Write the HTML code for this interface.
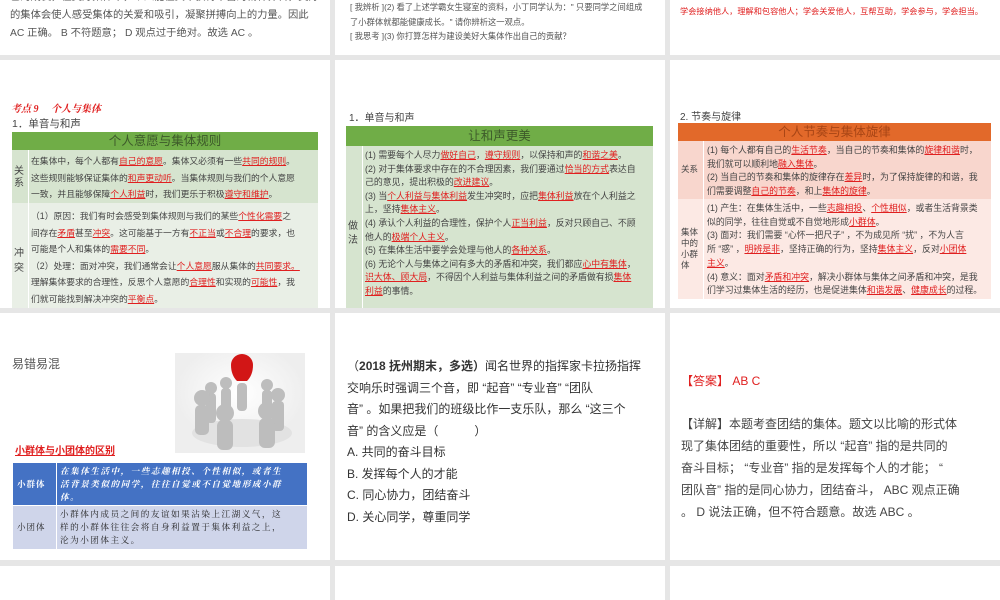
<!DOCTYPE html>
<html><head><meta charset="utf-8">
<style>
*{margin:0;padding:0;box-sizing:border-box}
body{width:1000px;height:600px;background:#e6e6e6;position:relative;overflow:hidden;font-family:"Liberation Sans","Noto Sans CJK SC",sans-serif;color:#444}
.s{position:absolute;background:#fff;overflow:hidden}
.a{position:absolute;white-space:nowrap}
u{color:#e02020;text-decoration:underline}
.r{color:#e02020}
</style></head><body>
<!-- row1 -->
<div class="s" style="left:0;top:0;width:330px;height:55px">
 <div class="a" style="left:10px;top:-11px;font-size:10.3px;line-height:18px;color:#555">己的成長，在美好集体中，个人能在其中获得丰富的精神养料，美好<br>的集体会使人感受集体的关爱和吸引，凝聚拼搏向上的力量。因此<br>AC 正确。 B 不符题意； D 观点过于绝对。故选 AC 。</div>
</div>
<div class="s" style="left:335px;top:0;width:330px;height:55px">
 <div class="a" style="left:15px;top:0;font-size:8.3px;line-height:14.5px;color:#555">[ 我辨析 ](2) 看了上述学霸女生寝室的资料，小丁同学认为：" 只要同学之间组成<br>了小群体就都能健康成长。" 请你辨析这一观点。<br>[ 我思考 ](3) 你打算怎样为建设美好大集体作出自己的贡献？</div>
</div>
<div class="s" style="left:670px;top:0;width:330px;height:55px">
 <div class="a r" style="left:10px;top:5px;font-size:8.2px">学会接纳他人，理解和包容他人；学会关爱他人，互帮互助，学会参与，学会担当。</div>
</div>
<!-- row2 col1 -->
<div class="s" style="left:0;top:60px;width:330px;height:248px">
 <div class="a r" style="left:11px;top:40px;font-size:10px;font-style:italic;font-weight:bold;font-family:'Liberation Serif','Noto Serif CJK SC',serif">考点 9　 个人与集体</div>
 <div class="a" style="left:12px;top:56px;font-size:10.5px">1．单音与和声</div>
 <div class="a" style="left:12px;top:72px;width:306px;height:18px;background:#70ad47;color:#3d5a2a;font-size:12.5px;text-align:center;line-height:18px">个人意愿与集体规则</div>
 <div class="a" style="left:12px;top:90px;width:306px;height:53px;background:#d6e4cf"></div>
 <div class="a" style="left:12px;top:143px;width:306px;height:105px;background:#e9efe6"></div>
 <div class="a" style="left:28px;top:90px;width:1px;height:158px;background:#fff"></div>
 <div class="a" style="left:14px;top:106px;font-size:10px;line-height:12px">关<br>系</div>
 <div class="a" style="left:14px;top:186px;font-size:10px;line-height:15px">冲<br>突</div>
 <div class="a" style="left:31px;top:93px;font-size:8.8px;line-height:16.5px">在集体中，每个人都有<u>自己的意愿</u>。集体又必须有一些<u>共同的规则</u>。<br>这些规则能够保证集体的<u>和声更动听</u>。当集体规则与我们的个人意愿<br>一致，并且能够保障<u>个人利益</u>时，我们更乐于积极<u>遵守和维护</u>。</div>
 <div class="a" style="left:31px;top:148px;font-size:8.8px;line-height:16.5px">（1）原因：我们有时会感受到集体规则与我们的某些<u>个性化需要</u>之<br>间存在<u>矛盾</u>甚至<u>冲突</u>。这可能基于一方有<u>不正当</u>或<u>不合理</u>的要求，也<br>可能是个人和集体的<u>需要不同</u>。<br>（2）处理：面对冲突，我们通常会让<u>个人意愿</u>服从集体的<u>共同要求。</u><br>理解集体要求的合理性，反思个人意愿的<u>合理性</u>和实现的<u>可能性</u>，我<br>们就可能找到解决冲突的<u>平衡点</u>。</div>
</div>
<!-- row2 col2 -->
<div class="s" style="left:335px;top:60px;width:330px;height:248px">
 <div class="a" style="left:14px;top:49px;font-size:10px">1．单音与和声</div>
 <div class="a" style="left:11px;top:66px;width:307px;height:20px;background:#70ad47;color:#3d5a2a;font-size:12.5px;text-align:center;line-height:20px">让和声更美</div>
 <div class="a" style="left:11px;top:86px;width:307px;height:162px;background:#d6e4cf"></div>
 <div class="a" style="left:27px;top:86px;width:1px;height:162px;background:#fff"></div>
 <div class="a" style="left:13px;top:160px;font-size:10px;line-height:14px">做<br>法</div>
 <div class="a" style="left:30px;top:89px;font-size:8.9px;line-height:13.6px">(1) 需要每个人尽力<u>做好自己</u>，<u>遵守规则</u>，以保持和声的<u>和谐之美</u>。<br>(2) 对于集体要求中存在的不合理因素，我们要通过<u>恰当的方式</u>表达自<br>己的意见，提出积极的<u>改进建议</u>。<br>(3) 当<u>个人利益与集体利益</u>发生冲突时，应把<u>集体利益</u>放在个人利益之<br>上，坚持<u>集体主义</u>。<br>(4) 承认个人利益的合理性，保护个人<u>正当利益</u>，反对只顾自己、不顾<br>他人的<u>极端个人主义</u>。<br>(5) 在集体生活中要学会处理与他人的<u>各种关系</u>。<br>(6) 无论个人与集体之间有多大的矛盾和冲突，我们都应<u>心中有集体</u>，<br><u>识大体、顾大局</u>，不得因个人利益与集体利益之间的矛盾做有损<u>集体</u><br><u>利益</u>的事情。</div>
</div>
<!-- row2 col3 -->
<div class="s" style="left:670px;top:60px;width:330px;height:248px">
 <div class="a" style="left:10px;top:48px;font-size:10px">2. 节奏与旋律</div>
 <div class="a" style="left:8px;top:63px;width:313px;height:18px;background:#e2692a;color:#a84515;font-size:12.5px;text-align:center;line-height:18px">个人节奏与集体旋律</div>
 <div class="a" style="left:8px;top:81px;width:313px;height:58px;background:#f8d6cd"></div>
 <div class="a" style="left:8px;top:139px;width:313px;height:100px;background:#fce9e4"></div>
 <div class="a" style="left:33px;top:81px;width:1px;height:158px;background:#fff"></div>
 <div class="a" style="left:11px;top:103px;font-size:8.5px">关系</div>
 <div class="a" style="left:11px;top:167px;font-size:8.5px;line-height:11px">集体<br>中的<br>小群<br>体</div>
 <div class="a" style="left:37px;top:84px;font-size:8.9px;line-height:13.7px">(1) 每个人都有自己的<u>生活节奏</u>，当自己的节奏和集体的<u>旋律和谐</u>时，<br>我们就可以顺利地<u>融入集体</u>。<br>(2) 当自己的节奏和集体的旋律存在<u>差异</u>时，为了保持旋律的和谐，我<br>们需要调整<u>自己的节奏</u>，和上<u>集体的旋律</u>。</div>
 <div class="a" style="left:37px;top:142px;font-size:8.9px;line-height:13.7px">(1) 产生：在集体生活中，一些<u>志趣相投</u>、<u>个性相似</u>，或者生活背景类<br>似的同学，往往自觉或不自觉地形成<u>小群体</u>。<br>(3) 面对：我们需要 “心怀一把尺子” ，不为成见所 “扰” ，不为人言<br>所 “惑” ，<u>明辨是非</u>，坚持正确的行为，坚持<u>集体主义</u>，反对<u>小团体</u><br><u>主义</u>。<br>(4) 意义：面对<u>矛盾和冲突</u>，解决小群体与集体之间矛盾和冲突，是我<br>们学习过集体生活的经历，也是促进集体<u>和谐发展</u>、<u>健康成长</u>的过程。</div>
</div>
<!-- row3 col1 -->
<div class="s" style="left:0;top:313px;width:330px;height:247px">
 <div class="a" style="left:12px;top:42px;font-size:12px;color:#555">易错易混</div>
 <svg class="a" style="left:175px;top:40px" width="130" height="100" viewBox="0 0 130 100">
  <defs><radialGradient id="g" cx="50%" cy="40%"><stop offset="0" stop-color="#fff"/><stop offset="1" stop-color="#eee"/></radialGradient></defs>
  <rect width="130" height="100" fill="url(#g)"/>
  <ellipse cx="67" cy="80" rx="50" ry="14" fill="#e2e2e2"/>
  <path d="M56 12 a11 11 0 1 1 22 0 q0 10 -6 16 h-10 q-6 -6 -6 -16z" fill="#d21616"/>
  <g fill="#bdbdbd">
   <circle cx="36" cy="35" r="6"/><rect x="31" y="40" width="10" height="30" rx="4"/>
   <circle cx="51" cy="30" r="6"/><rect x="46" y="35" width="10" height="28" rx="4"/>
   <circle cx="92" cy="32" r="6"/><rect x="87" y="37" width="10" height="28" rx="4"/>
   <circle cx="103" cy="42" r="7"/><rect x="97" y="48" width="12" height="30" rx="4"/>
   <circle cx="27" cy="45" r="8"/><rect x="20" y="52" width="14" height="30" rx="5"/>
   <rect x="62" y="30" width="10" height="28" rx="4"/>
   <circle cx="50" cy="60" r="9"/><rect x="42" y="67" width="16" height="30" rx="6"/>
   <circle cx="92" cy="58" r="9"/><rect x="84" y="65" width="16" height="30" rx="6"/>
  </g>
 </svg>
 <div class="a" style="left:15px;top:129px;font-size:10px;font-weight:bold;color:#e02020;text-decoration:underline">小群体与小团体的区别</div>
 <div class="a" style="left:13px;top:150px;width:294px;height:42px;background:#4472c4"></div>
 <div class="a" style="left:13px;top:193px;width:294px;height:43px;background:#cfd5ea"></div>
 <div class="a" style="left:56px;top:150px;width:1px;height:86px;background:#fff"></div>
 <div class="a" style="left:17px;top:165px;font-size:8.5px;color:#fff;font-weight:bold;letter-spacing:1px;font-family:'Liberation Serif','Noto Serif CJK SC',serif">小群体</div>
 <div class="a" style="left:17px;top:208px;font-size:8.5px;color:#222;letter-spacing:1px;font-family:'Liberation Serif','Noto Serif CJK SC',serif">小团体</div>
 <div class="a" style="left:60px;top:152px;font-size:8.6px;line-height:13px;color:#fff;font-weight:bold;font-style:italic;letter-spacing:1.5px;font-family:'Liberation Serif','Noto Serif CJK SC',serif">在集体生活中，一些志趣相投、个性相似，或者生<br>活背景类似的同学，往往自觉或不自觉地形成小群<br>体。</div>
 <div class="a" style="left:60px;top:195px;font-size:8.6px;line-height:13px;color:#222;letter-spacing:1.5px;font-family:'Liberation Serif','Noto Serif CJK SC',serif">小群体内成员之间的友谊如果沾染上江湖义气，这<br>样的小群体往往会将自身利益置于集体利益之上，<br>沦为小团体主义。</div>
</div>
<!-- row3 col2 -->
<div class="s" style="left:335px;top:313px;width:330px;height:247px">
 <div class="a" style="left:12px;top:43px;font-size:12px;line-height:21.5px;color:#333">（<b>2018 抚州期末，多选）</b>闻名世界的指挥家卡拉扬指挥<br>交响乐时强调三个音，即 “起音” “专业音” “团队<br>音” 。如果把我们的班级比作一支乐队，那么 “这三个<br>音” 的含义应是（　　　）<br>A. 共同的奋斗目标<br>B. 发挥每个人的才能<br>C. 同心协力，团结奋斗<br>D. 关心同学，尊重同学</div>
</div>
<!-- row3 col3 -->
<div class="s" style="left:670px;top:313px;width:330px;height:247px">
 <div class="a r" style="left:11px;top:59px;font-size:12px">【答案】 AB C</div>
 <div class="a" style="left:11px;top:100px;font-size:12px;line-height:22px;color:#444">【详解】本题考查团结的集体。题文以比喻的形式体<br>现了集体团结的重要性，所以 “起音” 指的是共同的<br>奋斗目标； “专业音” 指的是发挥每个人的才能； “<br>团队音” 指的是同心协力，团结奋斗， ABC 观点正确<br>。 D 说法正确，但不符合题意。故选 ABC 。</div>
</div>
<!-- row4 -->
<div class="s" style="left:0;top:566px;width:330px;height:34px"></div>
<div class="s" style="left:335px;top:566px;width:330px;height:34px"></div>
<div class="s" style="left:670px;top:566px;width:330px;height:34px"></div>
</body></html>
